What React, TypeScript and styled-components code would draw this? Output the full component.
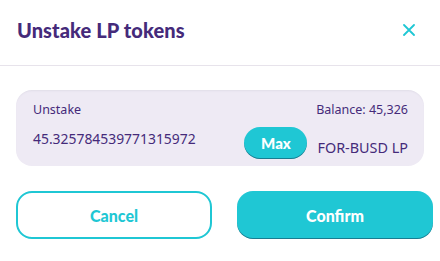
import React from "react";
import styled, { createGlobalStyle } from "styled-components";

const Global = createGlobalStyle`
  html, body { margin: 0; padding: 0; background: #ffffff; }
  * { box-sizing: border-box; }
`;

const Modal = styled.div`
  width: 440px;
  height: 261px;
  background: #ffffff;
  font-family: "Noto Sans", "Lato", sans-serif;
  color: #452a7a;
`;

const Header = styled.div`
  height: 66px;
  display: flex;
  align-items: center;
  justify-content: space-between;
  padding: 0 24px 0 17px;
  border-bottom: 1px solid #e7e3eb;
`;

const Title = styled.h2`
  margin: 0;
  font-family: "Lato", sans-serif;
  font-weight: 900;
  font-size: 20px;
  color: #452a7a;
  letter-spacing: 0.1px;
  transform: translateY(-3px);
`;

const CloseButton = styled.button`
  border: none;
  background: none;
  padding: 0;
  width: 14px;
  height: 14px;
  display: flex;
  align-items: center;
  justify-content: center;
  transform: translateY(-3px);
`;

const Body = styled.div`
  padding: 24px 16px 0 16px;
`;

const Panel = styled.div`
  background: #eeeaf4;
  border-radius: 16px;
  padding: 10px 16px 0 17px;
  height: 76px;
  box-shadow: inset 0 2px 2px -1px rgba(74, 74, 104, 0.08);
`;

const Row = styled.div<{ $mt?: number }>`
  display: flex;
  justify-content: space-between;
  align-items: center;
  margin-top: ${(p) => p.$mt ?? 0}px;
`;

const Label = styled.span`
  font-size: 12.5px;
  line-height: 20px;
`;

const Value = styled.span`
  font-size: 13.9px;
  line-height: 24px;
  transform: translateY(-4px);
`;

const Right = styled.div`
  display: flex;
  align-items: center;
`;

const MaxButton = styled.button`
  width: 63px;
  height: 32px;
  border: none;
  border-radius: 16px;
  background: #1fc7d4;
  color: #ffffff;
  font-family: "Lato", sans-serif;
  font-weight: 900;
  font-size: 15px;
  box-shadow: 0 -1px 0 0 rgba(14, 14, 44, 0.4) inset;
  margin-right: 10px;
`;

const Unit = styled.span`
  font-size: 14.4px;
  line-height: 24px;
  transform: translateY(5px);
`;

const Buttons = styled.div`
  display: grid;
  grid-template-columns: 196px 196px;
  gap: 25px;
  margin-top: 25px;
`;

const ActionButton = styled.button<{ $primary?: boolean }>`
  height: 48px;
  border-radius: 16px;
  font-family: "Lato", sans-serif;
  font-weight: 900;
  font-size: 16px;
  cursor: pointer;
  border: ${(p) => (p.$primary ? "none" : "2px solid #1fc7d4")};
  background: ${(p) => (p.$primary ? "#1fc7d4" : "#ffffff")};
  color: ${(p) => (p.$primary ? "#ffffff" : "#1fc7d4")};
  box-shadow: ${(p) =>
    p.$primary ? "0 -1px 0 0 rgba(14, 14, 44, 0.4) inset" : "none"};
`;

export default function App() {
  return (
    <>
      <Global />
      <Modal>
        <Header>
          <Title>Unstake LP tokens</Title>
          <CloseButton aria-label="close">
            <svg width="12" height="12" viewBox="0 0 12 12">
              <path
                d="M1 1 L11 11 M11 1 L1 11"
                stroke="#1fc7d4"
                strokeWidth="1.8"
                strokeLinecap="round"
              />
            </svg>
          </CloseButton>
        </Header>
        <Body>
          <Panel>
            <Row>
              <Label>Unstake</Label>
              <Label>Balance: 45,326</Label>
            </Row>
            <Row $mt={7}>
              <Value>45.325784539771315972</Value>
              <Right>
                <MaxButton>Max</MaxButton>
                <Unit>FOR-BUSD LP</Unit>
              </Right>
            </Row>
          </Panel>
          <Buttons>
            <ActionButton>Cancel</ActionButton>
            <ActionButton $primary>Confirm</ActionButton>
          </Buttons>
        </Body>
      </Modal>
    </>
  );
}
